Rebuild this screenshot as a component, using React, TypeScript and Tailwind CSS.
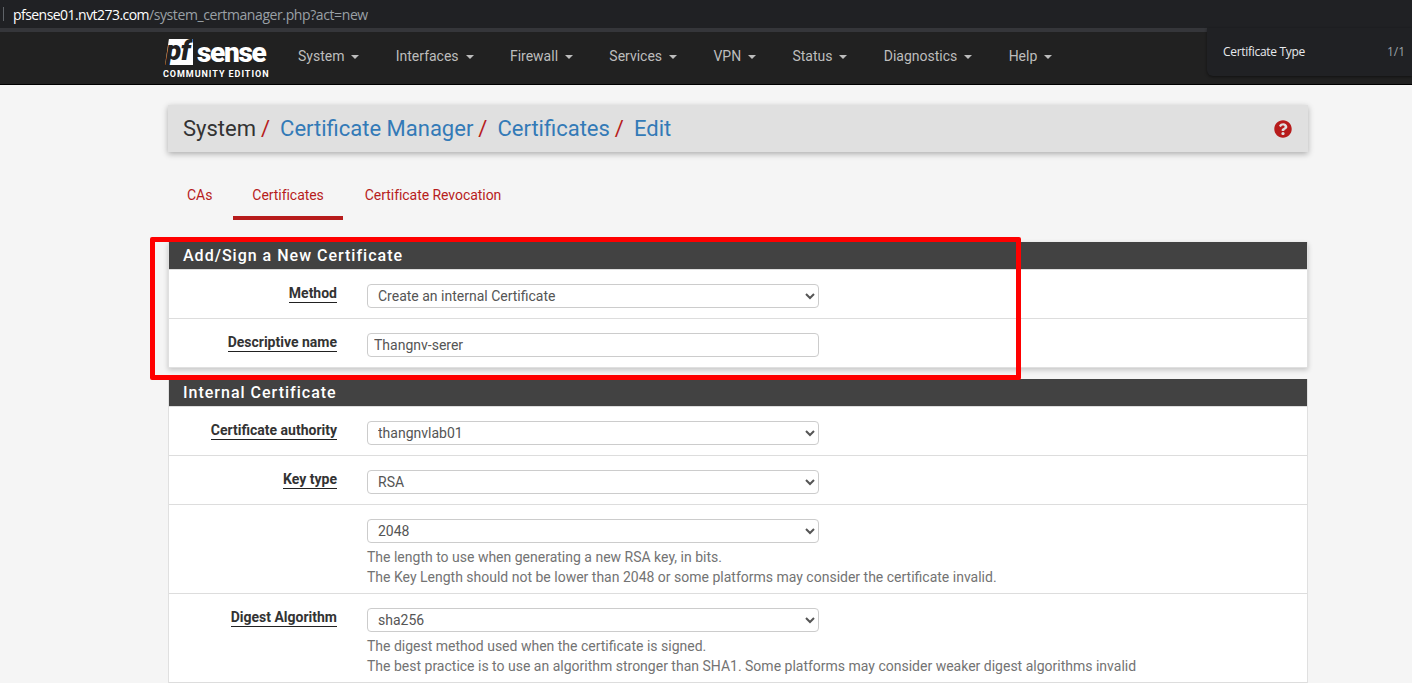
import { FaQuestionCircle } from "react-icons/fa";

const navItems = [
  "System",
  "Interfaces",
  "Firewall",
  "Services",
  "VPN",
  "Status",
  "Diagnostics",
  "Help",
];

function Logo() {
  return (
    <div className="mt-[7px] flex w-[106px] flex-col items-start self-start">
      <div className="ml-[2px] flex h-[26px] items-end">
        <div className="relative h-[26px] w-[28px]">
          <div className="absolute inset-0 bg-white [clip-path:polygon(14%_0,100%_0,100%_100%,0_100%)]" />
          <span className="absolute left-[1px] top-[0px] text-[28px] font-black italic leading-[24px] tracking-[-0.5px] text-[#212121]">
            pf
          </span>
        </div>
        <span className="ml-[4px] text-[28px] font-black leading-[24px] tracking-[-1.3px] text-white">
          sense
        </span>
      </div>
      <span className="mt-[4px] whitespace-nowrap text-[9px] font-bold leading-[10px] tracking-[0.95px] text-white">
        COMMUNITY EDITION
      </span>
    </div>
  );
}

function Select({ value }: { value: string }) {
  return (
    <select
      defaultValue={value}
      className="block h-6 w-[452px] rounded-[4px] border border-[#cccccc] bg-white px-[6px] text-[14px] text-[#555555]"
    >
      <option>{value}</option>
    </select>
  );
}

function Label({ text }: { text?: string }) {
  return (
    <div className="-mt-[3px] w-[168px] shrink-0 text-right">
      {text && (
        <span className="inline-block border-b border-[#212121] text-[14px] font-bold leading-[17px] text-[#333333]">
          {text}
        </span>
      )}
    </div>
  );
}

function Row({
  label,
  children,
}: {
  label?: string;
  children: React.ReactNode;
}) {
  return (
    <div className="flex border-b border-[#dddddd] pt-[14px] pb-[10px]">
      <Label text={label} />
      <div className="ml-[30px] w-[452px] shrink-0">{children}</div>
    </div>
  );
}

function Help({ lines }: { lines: string[] }) {
  return (
    <div className="mt-[4px] mb-[-4px] whitespace-nowrap text-[14px] leading-[20px] text-[#737373]">
      {lines.map((line) => (
        <div key={line}>{line}</div>
      ))}
    </div>
  );
}

function PanelHeading({ title }: { title: string }) {
  return (
    <div className="flex h-[28px] items-center border-b border-[#dddddd] bg-[#424242] pl-[14px] text-[16px] font-medium tracking-[1px] text-white">
      {title}
    </div>
  );
}

function Slash() {
  return <span className="ml-[5px] mr-[10px] text-[#b71c1c]">/</span>;
}

export default function App() {
  return (
    <div className="relative h-[683px] w-[1412px] overflow-hidden bg-[#f5f5f5] font-['Roboto',sans-serif]">
      {/* browser address bar */}
      <div className="flex h-[28px] items-center bg-[#202124] pl-[3px] font-['Open_Sans',sans-serif] text-[14px]">
        <div className="h-[14px] w-px bg-[#5f6368]" />
        <span className="ml-[9px] tracking-[-0.55px] text-white">pfsense01.nvt273.com</span>
        <span className="tracking-[-0.4px] text-[#9aa0a6]">/system_certmanager.php?act=new</span>
      </div>
      <div className="h-[4px] bg-[#35363a]" />

      {/* pfsense nav */}
      <div className="flex h-[53px] items-center border-b border-black bg-[#212121] pl-[163px]">
        <Logo />
        <div className="ml-[29px] flex items-center gap-[36.3px] pb-[3px]">
          {navItems.map((item) => (
            <div key={item} className="flex items-center text-[14px] text-[#bdbdbd]">
              {item}
              <span className="ml-[7px] mt-[1px] border-x-[4px] border-t-[4px] border-x-transparent border-t-[#bdbdbd]" />
            </div>
          ))}
        </div>
      </div>

      <div className="ml-[168px] w-[1140px]">
        {/* breadcrumb */}
        <div className="mt-[20px] flex h-[47px] items-center justify-between bg-[#e0e0e0] pl-[15px] pr-[16px] text-[22px] shadow-[0_2px_6px_rgba(0,0,0,0.3)]">
          <div className="flex whitespace-nowrap">
            <span className="text-[#333333]">System</span>
            <Slash />
            <span className="text-[#337ab7]">Certificate Manager</span>
            <Slash />
            <span className="text-[#337ab7]">Certificates</span>
            <Slash />
            <span className="text-[#337ab7]">Edit</span>
          </div>
          <FaQuestionCircle className="text-[#b71c1c]" size={18} />
        </div>

        {/* tabs */}
        <div className="mt-[22px] flex gap-[2px] text-[14px] tracking-[-0.05px] text-[#b71c1c]">
          <div className="flex h-[46px] items-center px-[19px] pb-[4px]">CAs</div>
          <div className="flex h-[46px] items-center border-b-[4px] border-[#b71c1c] px-[19px]">
            Certificates
          </div>
          <div className="flex h-[46px] items-center px-[20px] pb-[4px]">Certificate Revocation</div>
        </div>

        {/* first panel */}
        <div className="mt-[22px] border-x border-b border-[#e0e0e0] bg-white shadow-[0_2px_5px_rgba(0,0,0,0.2)]">
          <PanelHeading title="Add/Sign a New Certificate" />
          <Row label="Method">
            <Select value="Create an internal Certificate" />
          </Row>
          <div className="flex pt-[14px] pb-[10px]">
            <Label text="Descriptive name" />
            <input
              defaultValue="Thangnv-serer"
              className="ml-[30px] h-6 w-[452px] rounded-[4px] border border-[#cccccc] bg-white px-[6px] text-[14px] text-[#555555]"
            />
          </div>
        </div>

        {/* second panel */}
        <div className="mt-[11px] border-x border-[#e0e0e0] bg-white">
          <PanelHeading title="Internal Certificate" />
          <Row label="Certificate authority">
            <Select value="thangnvlab01" />
          </Row>
          <Row label="Key type">
            <Select value="RSA" />
          </Row>
          <Row>
            <Select value="2048" />
            <Help
              lines={[
                "The length to use when generating a new RSA key, in bits.",
                "The Key Length should not be lower than 2048 or some platforms may consider the certificate invalid.",
              ]}
            />
          </Row>
          <Row label="Digest Algorithm">
            <Select value="sha256" />
            <Help
              lines={[
                "The digest method used when the certificate is signed.",
                "The best practice is to use an algorithm stronger than SHA1. Some platforms may consider weaker digest algorithms invalid",
              ]}
            />
          </Row>
        </div>
      </div>

      {/* find-in-page popup */}
      <div className="absolute left-[1207px] top-[28px] flex h-[48px] w-[205px] items-center justify-between rounded-bl-[6px] bg-[#202124] pl-[16px] pr-[7px] font-['Open_Sans',sans-serif] text-[12px] shadow-[0_1px_3px_rgba(0,0,0,0.5)]">
        <span className="tracking-[-0.3px] text-[#e8eaed]">Certificate Type</span>
        <span className="text-[#9aa0a6]">1/1</span>
      </div>

      {/* red annotation box */}
      <div className="absolute left-[150px] top-[237px] h-[143px] w-[871px] rounded-[2px] border-[5px] border-[#ff0000]" />
    </div>
  );
}
